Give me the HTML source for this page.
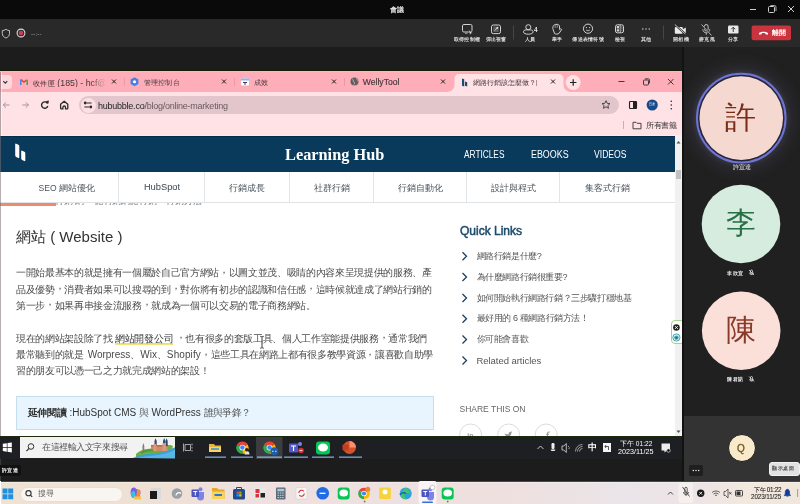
<!DOCTYPE html>
<html lang="zh-Hant-TW"><head><meta charset="utf-8">
<style>
*{margin:0;padding:0;box-sizing:border-box}
html,body{width:800px;height:504px;overflow:hidden;background:#1c1c1c;font-family:"Liberation Sans",sans-serif}
.a{position:absolute}
.t{position:absolute;white-space:nowrap;line-height:1}
body>*{will-change:transform}
svg{position:absolute;overflow:visible}
.lb{position:absolute;top:37px;font-size:5px;letter-spacing:.25px;line-height:1;color:#dcdcdc;font-weight:700;white-space:nowrap;transform:translateX(-50%)}
.tab{position:absolute;top:6.5px;font-size:7px;line-height:1;color:#45363a;white-space:nowrap;letter-spacing:.3px;font-weight:500}
.cx{position:absolute;top:0}
.sn{position:absolute;top:47.5px;font-size:8.5px;line-height:1;color:#4a545d;white-space:nowrap;transform:translateX(-50%)}
.p{position:absolute;left:16px;font-size:10px;line-height:16.2px;color:#4a4a4a;font-weight:350;white-space:nowrap;letter-spacing:-.33px}
.cm{position:relative;top:-3.5px}
.lk{color:#333;padding-bottom:.8px;background:linear-gradient(#f1de5c,#f1de5c) 0 100%/100% 1.8px no-repeat}
.ql{position:absolute;left:476.5px;font-size:9px;letter-spacing:-.4px;line-height:1;color:#555;white-space:nowrap}

</style></head><body>
<!-- ===== Teams title bar ===== -->
<div class="a" style="left:0;top:0;width:800px;height:19px;background:#0a0a0a"></div>
<div class="t" style="left:390px;top:5.5px;font-size:7px;font-weight:700;color:#e0e0e0">會議</div>
<svg style="left:0;top:0" width="800" height="19">
  <path d="M750 9.5h6" stroke="#cfcfcf" stroke-width="1"/>
  <rect x="768.5" y="6.5" width="6" height="6" rx="1" fill="none" stroke="#cfcfcf" stroke-width="1"/>
  <path d="M770.5 5.5h4a1.5 1.5 0 0 1 1.5 1.5v4" fill="none" stroke="#cfcfcf" stroke-width="0.8"/>
  <path d="M788 6l6 6M794 6l-6 6" stroke="#cfcfcf" stroke-width="1"/>
</svg>
<!-- ===== toolbar ===== -->
<div class="a" style="left:0;top:19px;width:800px;height:28px;background:#292929"></div>
<svg style="left:0;top:19px" width="800" height="28">
  <!-- shield -->
  <path d="M5.9 10.3c1.2.9 2.4 1.3 3.6 1.3v2.8c0 2.4-1.5 3.8-3.6 4.6c-2.1-.8-3.6-2.2-3.6-4.6v-2.8c1.2 0 2.4-.4 3.6-1.3z" fill="none" stroke="#d0d0d0" stroke-width="0.9"/>
  <!-- record -->
  <circle cx="21" cy="14" r="3.9" fill="none" stroke="#e0d8da" stroke-width="1.1"/>
  <circle cx="21" cy="14" r="2.3" fill="#d03a5a"/>
  <!-- control -->
  <rect x="462.5" y="5.5" width="9.5" height="7.5" rx="1.4" fill="none" stroke="#d4d4d4" stroke-width="1"/>
  <path d="M465 14.3h2.5" stroke="#bdbdbd" stroke-width=".8"/>
  <path d="M468.6 10.6l4 3.8l-1.8 .1l-.9 1.6z" fill="#f0f0f0" stroke="#222" stroke-width=".5"/>
  <!-- popout -->
  <rect x="491.5" y="6" width="9" height="8.6" rx="1.8" fill="none" stroke="#d4d4d4" stroke-width="1"/>
  <rect x="493.2" y="7.6" width="5.6" height="5.4" rx=".6" fill="#5c5c5c"/>
  <path d="M494.6 11.6l2.6-2.6" stroke="#e0e0e0" stroke-width=".8"/>
  <circle cx="497.3" cy="8.8" r=".9" fill="#f0f0f0"/>
  <!-- separator -->
  <path d="M513.5 6.5v14M663.5 6.5v14" stroke="#4a4a4a" stroke-width="0.9"/>
  <!-- people -->
  <circle cx="528.3" cy="8.2" r="2.5" fill="none" stroke="#d4d4d4" stroke-width="1"/>
  <path d="M523.5 12.8c0-1.3 1.2-1.9 2.5-1.9h4.6c1.3 0 2.5.6 2.5 1.9v.2c0 1.2-2 2.2-4.8 2.2s-4.8-1-4.8-2.2z" fill="none" stroke="#d4d4d4" stroke-width="1"/>
  <text x="534" y="12.6" font-size="6.5" fill="#e4e4e4" font-family="Liberation Sans" font-weight="bold">4</text>
  <!-- hand -->
  <path d="M554.6 14.6L553 10.2C552.6 9 552.8 7.6 553.5 6.6C554.5 5.3 557 4.9 558.5 5.7C559.5 6.3 559.6 7.6 559.5 9.1L559.6 10.6L560.4 9.9C561.1 9.5 561.8 10.2 561.4 10.9L559 14.4C558.1 15.3 555.5 15.3 554.6 14.6Z" fill="none" stroke="#d4d4d4" stroke-width="1"/>
  <path d="M555.2 6.2v2.8M557.2 5.6v3.2" stroke="#bdbdbd" stroke-width=".7"/>
  <!-- smiley -->
  <circle cx="588" cy="9.7" r="4.6" fill="none" stroke="#d4d4d4" stroke-width="1"/>
  <circle cx="586.4" cy="8.6" r=".65" fill="#d4d4d4"/><circle cx="589.6" cy="8.6" r=".65" fill="#d4d4d4"/>
  <path d="M586 10.9c1 1.1 3 1.1 4 0" fill="none" stroke="#d4d4d4" stroke-width="0.8"/>
  <!-- view -->
  <rect x="615.5" y="5.8" width="8" height="8" rx="1.8" fill="none" stroke="#d4d4d4" stroke-width="1"/>
  <path d="M620.2 5.8v8" stroke="#d4d4d4" stroke-width=".8"/>
  <rect x="616.7" y="7.1" width="2.4" height="2.3" rx=".5" fill="#d4d4d4"/><rect x="616.7" y="10.2" width="2.4" height="2.3" rx=".5" fill="#d4d4d4"/>
  <circle cx="621.9" cy="7.9" r=".55" fill="#d4d4d4"/><circle cx="621.9" cy="9.8" r=".55" fill="#d4d4d4"/><circle cx="621.9" cy="11.7" r=".55" fill="#d4d4d4"/>
  <!-- more -->
  <circle cx="642.8" cy="10" r=".7" fill="#d8d8d8"/><circle cx="646" cy="10" r=".7" fill="#d8d8d8"/><circle cx="649.2" cy="10" r=".7" fill="#d8d8d8"/>
  <!-- camera off -->
  <path d="M675.8 8h6a1 1 0 0 1 1 1v4.8a1 1 0 0 1-1 1h-6a1 1 0 0 1-1-1v-4.8a1 1 0 0 1 1-1zM682.8 10.2l3-1.8v6l-3-1.8z" fill="#ececec"/>
  <path d="M674.8 5.5l10.5 9.5" stroke="#292929" stroke-width="1.8"/>
  <path d="M674.8 5.5l10.5 9.5" stroke="#ececec" stroke-width="0.8"/>
  <!-- mic off -->
  <rect x="704.5" y="5.5" width="3.6" height="6.5" rx="1.8" fill="none" stroke="#d8d8d8" stroke-width="0.9"/>
  <path d="M702.8 10.2c0 2.2 1.6 3.6 3.5 3.6s3.5-1.4 3.5-3.6M706.3 13.8v2" fill="none" stroke="#d8d8d8" stroke-width="0.8"/>
  <path d="M701.5 5.5l10 11" stroke="#292929" stroke-width="1.6"/>
  <path d="M701.5 5.5l10 11" stroke="#d8d8d8" stroke-width="0.8"/>
  <!-- share -->
  <rect x="728" y="6.5" width="10.5" height="8" rx="1.2" fill="#e8e8e8"/>
  <path d="M733.25 13v-4.5M731.3 10.2l1.95-2l1.95 2" fill="none" stroke="#292929" stroke-width="0.9"/>
  <!-- leave -->
  <rect x="751.6" y="6.6" width="39.4" height="14.7" rx="2" fill="#c9343e"/>
  <path d="M758.9 14.3c1.6-2 7.5-2 9.2 0l-.4 1.4l-2.2-.5l-.3-1c-1-.3-2.4-.3-3.4 0l-.3 1l-2.2.5z" fill="#fff"/>
</svg>
<div class="t" style="left:30.5px;top:30.5px;font-size:6px;color:#b4b4b4;letter-spacing:.2px">--:--</div>
<div class="t" style="left:772px;top:30px;font-size:6.5px;color:#fff;font-weight:bold">離開</div>
<div class="lb" style="left:467px">取得控制權</div>
<div class="lb" style="left:496px">彈出視窗</div>
<div class="lb" style="left:530px">人員</div>
<div class="lb" style="left:557px">舉手</div>
<div class="lb" style="left:588px">傳送表情符號</div>
<div class="lb" style="left:619.5px">檢視</div>
<div class="lb" style="left:646px">其他</div>
<div class="lb" style="left:680.5px">開相機</div>
<div class="lb" style="left:706.5px">麥克風</div>
<div class="lb" style="left:733px">分享</div>
<!-- ===== stage ===== -->
<div class="a" style="left:682px;top:47px;width:2px;height:434px;background:#121212"></div>
<!-- ===== Chrome window ===== -->
<div class="a" style="left:0;top:70px;width:682px;height:1px;background:#181c06"></div>
<div class="a" style="left:0;top:71px;width:682px;height:1px;background:#d6ccb0"></div>
<div class="a" id="chrome" style="left:0;top:72px;width:682px;height:364px;background:#fff;overflow:hidden">
  <!-- tab strip -->
  <div class="a" style="left:0;top:0;width:682px;height:20px;background:#fdaeb9"></div>
  <div class="a" style="left:1px;top:2.5px;width:11px;height:14.5px;background:#fdd9de;border-radius:0 4px 4px 0"></div>
  <svg style="left:0;top:0" width="682" height="20">
    <path d="M3.3 9.2l2 2l2-2" fill="none" stroke="#333" stroke-width="1.1"/>
    <!-- gmail -->
    <path d="M20.8 7.6l3.2 2.5l3.2-2.5" fill="none" stroke="#ea4335" stroke-width="1.5"/>
    <path d="M20.8 13v-5.4" stroke="#4285f4" stroke-width="1.5"/>
    <path d="M27.2 13v-5.4" stroke="#34a853" stroke-width="1.5"/>
    <path d="M26.6 7.9l1.2-.9" stroke="#fbbc04" stroke-width="1.3"/>
    <path d="M112 7.5l4 4M116 7.5l-4 4" stroke="#222" stroke-width="1"/>
    <path d="M124.5 6v8" stroke="#e89aa6" stroke-width="1"/>
    <!-- cloud console hex -->
    <path d="M134.5 5.3l3.9 2.2v4.5l-3.9 2.2l-3.9-2.2v-4.5z" fill="#4a7fe0"/>
    <circle cx="134.5" cy="9.75" r="1.6" fill="#fff"/>
    <path d="M222 7.5l4 4M226 7.5l-4 4" stroke="#222" stroke-width="1"/>
    <path d="M234.5 6v8" stroke="#e89aa6" stroke-width="1"/>
    <!-- calendar-ish -->
    <rect x="241" y="6.5" width="8" height="7" rx="1" fill="#fff"/>
    <rect x="241" y="6.5" width="8" height="2" fill="#8ab4f8"/>
    <path d="M243 10.5h4M245 10.5v2.5" stroke="#3c4043" stroke-width="1"/>
    <path d="M332 7.5l4 4M336 7.5l-4 4" stroke="#222" stroke-width="1"/>
    <path d="M344.5 6v8" stroke="#e89aa6" stroke-width="1"/>
    <!-- globe -->
    <circle cx="354.5" cy="9.5" r="4" fill="#5f5f63"/>
    <path d="M352 7c1 .3 1.5 1 1.3 2c-.2.8.6 1.3 1.2 1.5c.3.9-.2 1.9-.9 2.4M356.5 6.2c-.3.8.2 1.4 1 1.5c.6.3.5 1 .3 1.6" fill="none" stroke="#fdaeb9" stroke-width=".8"/>
    <path d="M441 7.5l4 4M445 7.5l-4 4" stroke="#222" stroke-width="1"/>
  </svg>
  <div class="tab" style="left:33px;width:73px;overflow:hidden;-webkit-mask-image:linear-gradient(90deg,#000 80%,transparent)">收件匣<span style="font-size:8.8px;letter-spacing:0"> (185) - hcf@M</span></div>
  <div class="tab" style="left:143.5px">管理控制台</div>
  <div class="tab" style="left:253.5px">成效</div>
  <div class="tab" style="left:362.8px;font-size:8.6px;letter-spacing:0;top:5.8px;-webkit-text-stroke:.15px #45363a">WellyTool</div>
  <!-- active tab -->
  <svg style="left:447px;top:0" width="130" height="20">
    <path d="M0 20c4 0 7.5-3 7.5-7v-6.5c0-2.5 2-4.5 4.5-4.5h100c2.5 0 4.5 2 4.5 4.5v6.5c0 4 3.5 7 7.5 7z" fill="#fee2e6"/>
  </svg>
  <svg style="left:0;top:0" width="682" height="20">
    <path d="M462 6.5l2.2 .7v7.3l-2.2-.7z" fill="#1d4a6e"/>
    <path d="M465 9.5l2.2 .7v4.3l-2.2-.7z" fill="#1d4a6e"/>
    <path d="M551 7.5l4 4M555 7.5l-4 4" stroke="#222" stroke-width="1"/>
    <circle cx="573.2" cy="10.5" r="7.5" fill="#fee2e6"/>
    <path d="M570 10.5h6.4M573.2 7.3v6.4" stroke="#222" stroke-width="1.2"/>
    <path d="M618.5 9.5h6" stroke="#3a3a3a" stroke-width="1"/>
    <rect x="643.5" y="8" width="5" height="5" rx=".8" fill="none" stroke="#3a3a3a" stroke-width="1"/>
    <path d="M645 6.8h3.3a1.2 1.2 0 0 1 1.2 1.2v3.3" fill="none" stroke="#3a3a3a" stroke-width=".9"/>
    <path d="M668 7l5.5 5.5M673.5 7l-5.5 5.5" stroke="#3a3a3a" stroke-width="1"/>
  </svg>
  <div class="tab" style="left:472.8px;width:72px;letter-spacing:0;overflow:hidden;-webkit-mask-image:linear-gradient(90deg,#000 85%,transparent)">網路行銷該怎麼做？|</div>
  <!-- toolbar -->
  <div class="a" style="left:0;top:20px;width:682px;height:44px;background:#fee2e6"></div>
  <div class="a" style="left:79px;top:24px;width:540px;height:18px;background:#e3c6cb;border-radius:9px"></div>
  <div class="a" style="left:80.5px;top:25.5px;width:15px;height:15px;background:#fde0e4;border-radius:8px"></div>
  <svg style="left:0;top:20px" width="682" height="44">
    <path d="M9.5 13h-6.2M6 10.3l-2.7 2.7l2.7 2.7" fill="none" stroke="#a5959a" stroke-width="1"/>
    <path d="M22.3 13h6.2M25.8 10.3l2.7 2.7l-2.7 2.7" fill="none" stroke="#a5959a" stroke-width="1"/>
    <path d="M47.6 11.6a3.2 3.2 0 1 0 .2 2.4" fill="none" stroke="#2a2a2a" stroke-width="1.4"/>
    <path d="M45.6 9.3l3.3-.9l-.5 3.4z" fill="#2a2a2a"/>
    <path d="M60.6 12.3l3.6-3.1l3.6 3.1v3.9c0 .4-.3.7-.7.7h-1.6v-1.6a1.3 1.3 0 0 0-2.6 0v1.6h-1.6c-.4 0-.7-.3-.7-.7z" fill="none" stroke="#2a2a2a" stroke-width="1.3" stroke-linejoin="round"/>
    <!-- tune -->
    <path d="M86.6 11h5M84.3 15h5" stroke="#2a2a2a" stroke-width="1.1"/>
    <circle cx="85.2" cy="11" r="1.4" fill="#2a2a2a"/><circle cx="90.8" cy="15" r="1.4" fill="#2a2a2a"/>
    <!-- star -->
    <path d="M606 8.7l1.2 2.6l2.8.3l-2.1 1.9l.6 2.8l-2.5-1.5l-2.5 1.5l.6-2.8l-2.1-1.9l2.8-.3z" fill="none" stroke="#3a3a3a" stroke-width=".9"/>
    <!-- side panel -->
    <rect x="629.5" y="9.5" width="7" height="7" rx=".8" fill="none" stroke="#222" stroke-width="1.1"/>
    <rect x="633" y="9.5" width="3.5" height="7" fill="#222"/>
    <!-- avatar -->
    <circle cx="652.2" cy="13" r="5.6" fill="#164c8c"/>
    <!-- kebab -->
    <circle cx="671.3" cy="9.3" r=".8" fill="#222"/><circle cx="671.3" cy="13" r=".8" fill="#222"/><circle cx="671.3" cy="16.7" r=".8" fill="#222"/>
    <!-- bookmarks -->
    <path d="M623.5 29v8" stroke="#e8a0ab" stroke-width="1"/>
    <path d="M633 30.3h3l1 1h4v5.5h-8z" fill="none" stroke="#444" stroke-width="1"/>
  </svg>
  <div class="t" style="left:649px;top:30.5px;font-size:3px;color:#fff">宜達</div>
  <div class="t" style="left:98px;top:29.5px;font-size:9px;letter-spacing:-.24px;color:#6a5a5e"><span style="color:#1f1f1f">hububble.co</span>/blog/online-marketing</div>
  <div class="t" style="left:646px;top:49.5px;font-size:8px;color:#333;letter-spacing:-.3px">所有書籤</div>
    <div class="a" style="left:0;top:63px;width:682px;height:1px;background:#fdeaf0"></div>
  <!-- ===== page ===== -->
  <div class="a" style="left:0;top:64px;width:675px;height:300px;background:#fff;overflow:hidden">
    <!-- header -->
    <div class="a" style="left:0;top:0;width:675px;height:35.5px;background:#093a5c"></div>
    <div class="a" style="left:0;top:0;width:675px;height:1px;background:#062c4c"></div>
    <svg style="left:0;top:0" width="675" height="36">
      <path d="M15.2 8.3c0-.6.5-.9 1-.6l2.2 1.1c.5.3.9.8.9 1.4v11.3c0 .6-.5.9-1 .6l-2.2-1.1c-.5-.3-.9-.8-.9-1.4z" fill="#fff"/>
      <path d="M21.2 15.3c0-.6.5-.9 1-.6l2.2 1.1c.5.3.9.8.9 1.4v7.3c0 .6-.5.9-1 .6l-2.2-1.1c-.5-.3-.9-.8-.9-1.4z" fill="#fff"/>
    </svg>
    <div class="t" style="left:285px;top:10px;font-family:'Liberation Serif',serif;font-weight:bold;font-size:17px;color:#fff;transform:scaleX(.96);transform-origin:0 0">Learning Hub</div>
    <div class="t nav" style="left:463.5px;top:13.5px;font-size:10px;color:#fff;transform:scaleX(.83);transform-origin:0 0">ARTICLES</div>
    <div class="t nav" style="left:531px;top:13.5px;font-size:10px;color:#fff;transform:scaleX(.89);transform-origin:0 0">EBOOKS</div>
    <div class="t nav" style="left:594px;top:13.5px;font-size:10px;color:#fff;transform:scaleX(.86);transform-origin:0 0">VIDEOS</div>
    <!-- subnav -->
    <div class="a" style="left:0;top:35.5px;width:675px;height:31px;background:#fff;border-bottom:1px solid #dfe3e6"></div>
    <svg style="left:0;top:35.5px" width="675" height="31">
      <path d="M118.5 0v30M204.5 0v30M289.5 0v30M373.5 0v30M466.5 0v30M559.5 0v30" stroke="#e2e5e8" stroke-width="1"/>
    </svg>
    <div class="sn" style="left:66.75px">SEO 網站優化</div>
    <div class="sn" style="left:162px;font-size:9.3px;top:47px;-webkit-text-stroke:.05px #3a4550">HubSpot</div>
    <div class="sn" style="left:247px">行銷成長</div>
    <div class="sn" style="left:331.5px">社群行銷</div>
    <div class="sn" style="left:420.7px">行銷自動化</div>
    <div class="sn" style="left:513.5px">設計與程式</div>
    <div class="sn" style="left:607px">集客式行銷</div>
    <!-- progress -->
    <div class="a" style="left:0;top:66.5px;width:55.5px;height:3.7px;background:#ef8a6d"></div>
    <div class="a" style="left:55px;top:67px;width:148px;height:2px;overflow:hidden">
      <div class="t" style="left:0;top:-6px;font-size:9px;color:#777;letter-spacing:-.2px">行銷 網<span style="margin-left:11px">路行銷網路行銷</span><span style="margin-left:10px">行銷方法</span> 數位行</div>
    </div>
    <!-- article -->
    <div class="t" style="left:16px;top:93px;font-size:15px;color:#333">網站 ( Website )</div>
    <div class="p" style="top:129.3px">一開始最基本的就是擁有一個屬於自己官方網站<span class="cm">，</span>以圖文並茂、吸睛的內容來呈現提供的服務、產<br>品及優勢<span class="cm">，</span>消費者如果可以搜尋的到<span class="cm">，</span>對你將有初步的認識和信任感<span class="cm">，</span>這時候就達成了網站行銷的<br>第一步<span class="cm">，</span>如果再串接金流服務<span class="cm">，</span>就成為一個可以交易的電子商務網站。</div>
    <div class="p" style="top:194.8px">現在的網站架設除了找 <span class="lk">網站開發公司</span> <span class="cm">，</span>也有很多的套版工具、個人工作室能提供服務<span class="cm">，</span>通常我們<br>最常聽到的就是 <span style="letter-spacing:0;margin-left:1.5px">Worpress</span>、<span style="letter-spacing:0;margin-left:.3px">Wix</span>、<span style="letter-spacing:.1px;margin-left:.3px">Shopify</span><span class="cm">，</span>這些工具在網路上都有很多教學資源<span class="cm">，</span>讓喜歡自助學<br>習的朋友可以憑一己之力就完成網站的架設！</div>
    <svg style="left:0;top:0" width="675" height="300">
      <path d="M260.2 200.3c.8 0 1.5.3 1.8.8c.3-.5 1-.8 1.8-.8M262 201.1v10.3M260.2 212.2c.8 0 1.5-.3 1.8-.8c.3.5 1 .8 1.8.8" fill="none" stroke="#222" stroke-width=".9"/>
    </svg>
    <div class="a" style="left:15.5px;top:260px;width:418px;height:34px;background:#e8f5fe;border:1px solid #c6dfee"></div>
    <div class="t" style="left:27.7px;top:272px;font-size:10px;color:#333"><b style="letter-spacing:-.2px">延伸閱讀 </b>:HubSpot CMS <span style="color:#555;letter-spacing:-.3px">與</span> WordPress <span style="color:#555;letter-spacing:-.6px">誰與爭鋒？</span></div>
    <!-- sidebar -->
    <div class="t" style="left:460px;top:89px;font-size:12px;color:#1d4a6a;-webkit-text-stroke:.5px #1d4a6a">Quick Links</div>
    <svg style="left:0;top:0" width="675" height="300">
      <g fill="none" stroke="#1d3f5c" stroke-width="1.3" transform="translate(0 .5)">
        <path d="M462.5 115.7l4 4l-4 4M462.5 136.5l4 4l-4 4M462.5 157.5l4 4l-4 4M462.5 178.2l4 4l-4 4M462.5 199l4 4l-4 4M462.5 220l4 4l-4 4"/>
      </g>
      <circle cx="470.6" cy="299" r="11" fill="none" stroke="#dcdcdc"/>
      <circle cx="508.7" cy="299" r="11" fill="none" stroke="#dcdcdc"/>
      <circle cx="546.2" cy="299" r="11" fill="none" stroke="#dcdcdc"/>
      <text x="467.2" y="301.5" font-size="7" font-weight="bold" fill="#9a9a9a" font-family="Liberation Sans">in</text>
      <path d="M504.5 297.5c1.5.8 3 1 4.2.6c-.3-1.6 1-2.6 2.2-2.3l1.3-.5l-.6 1c0 3-2.5 5-5 5" fill="#9a9a9a"/>
      <path d="M547.5 301v-3.5c0-1 .5-1.5 1.5-1.5h.8M546 298.2h3" fill="none" stroke="#9a9a9a" stroke-width="1.1"/>
    </svg>
    <div class="ql" style="top:115.5px">網路行銷是什麼?</div>
    <div class="ql" style="top:136.5px">為什麼網路行銷很重要?</div>
    <div class="ql" style="top:157.5px">如何開始執行網路行銷？三步驟打穩地基</div>
    <div class="ql" style="top:178px">最好用的 6 種網路行銷方法！</div>
    <div class="ql" style="top:199px">你可能會喜歡</div>
    <div class="ql" style="top:220.3px;font-size:9.5px;letter-spacing:-.05px">Related articles</div>
    <div class="t" style="left:459.5px;top:269px;font-size:8.5px;color:#666">SHARE THIS ON</div>
  </div>
  <!-- scrollbar -->
  <div class="a" style="left:675px;top:64px;width:7px;height:300px;background:#f1f1f1"></div>
  <div class="a" style="left:676px;top:98px;width:5px;height:8.5px;background:#c1c1c1"></div>
  <svg style="left:675px;top:64px" width="7" height="300">
    <path d="M1.5 7.5l2-2.5l2 2.5z" fill="#505050"/>
    <path d="M1.5 294.5l2 2.5l2-2.5z" fill="#505050"/>
  </svg>
    <!-- widget -->
    <div class="a" style="left:670.5px;top:248.3px;width:14px;height:23.5px;border:1.5px solid #a6d18a;border-radius:4px;background:#fff"></div>
    <svg style="left:0;top:-8px" width="682" height="300">
      <circle cx="676.4" cy="263.5" r="3.3" fill="#222"/>
      <path d="M675 262.1l2.8 2.8M677.8 262.1l-2.8 2.8" stroke="#fff" stroke-width=".9"/>
      <circle cx="676.4" cy="273.5" r="3.6" fill="#e6f6f7" stroke="#2f9aa3" stroke-width=".9"/><circle cx="676.4" cy="273.6" r="2.2" fill="#3aa3ad"/><path d="M675.5 273h1.8v1.6h-1.8z" fill="#1d6c74"/>
    </svg>

</div>

<div class="a" style="left:0;top:72px;width:1px;height:364px;background:rgba(120,110,115,.55)"></div>
<div class="a" style="left:1px;top:72px;width:1px;height:64px;background:rgba(255,255,255,.5)"></div>
<!-- ===== shared taskbar ===== -->
<div class="a" style="left:0;top:436px;width:682px;height:1px;background:#1b2a0a"></div>
<div class="a" style="left:0;top:437px;width:682px;height:22px;background:#1e1f22"></div>
<svg style="left:0;top:437px" width="682" height="22">
  <path d="M2.8 6.8l4-.6v3.9h-4zM7.5 6.1l4.3-.6v4.6h-4.3zM2.8 10.8h4v3.9l-4-.6zM7.5 10.8h4.3v4.6l-4.3-.6z" fill="#fff"/>
</svg>
<div class="a" style="left:20px;top:437px;width:155px;height:21px;background:#f2f2f2"></div>
<svg style="left:20px;top:437px" width="155" height="21">
  <circle cx="11" cy="9.5" r="2.8" fill="none" stroke="#333" stroke-width="1"/>
  <path d="M9 11.5l-2.6 2.6" stroke="#333" stroke-width="1.1"/>
  <!-- castle art -->
  <path d="M113 21c4-3 8-5 14-5.5c8-.5 14-1.5 19-4.5c3-1.8 6-2.5 9-2.5v12.5z" fill="#f6f0d8"/>
  <path d="M116 17c3-3 7-4.5 11-5c6-.5 12-1 17-3c4-1.5 7-1.5 9 0l-1 3c-5 3-12 5-20 5.5c-6 .5-11 1-16 3z" fill="#6fae45"/>
  <path d="M113 21c5-3 11-4 18-4.3c8-.3 16-2.5 24-6.5v3c-7 4-14 6-22 7.5z" fill="#3b9fd8"/>
  <path d="M118 21c5-1.5 10-2 16-2.5c7-.5 13-2.5 21-5v8z" fill="#58b6e6"/>
  <rect x="131" y="9" width="17" height="5" fill="#cf8a68"/>
  <rect x="131" y="8" width="17" height="1.5" fill="#b86a4e"/>
  <path d="M143 4l1.2-3l1.2 3v5h-2.4z" fill="#2e4a78"/>
  <path d="M154.5 4l1.1-2.8l1.1 2.8v5h-2.2zM165.5 4l1.1-2.8l1.1 2.8v5h-2.2z" fill="#2e4a78" transform="translate(-20 0)"/>
  <rect x="142.5" y="6" width="3.5" height="8" fill="#d99a78"/>
  <rect x="133.5" y="7" width="3" height="7" fill="#d99a78"/>
  <path d="M122.5 9l.9-3l.9 3v6h-1.8z" fill="#8a7a6a"/>
  <path d="M121 16c3-2 8-3 12-2.5" fill="none" stroke="#4f9a38" stroke-width="2"/>
</svg>
<div class="t" style="left:41.5px;top:443px;font-size:9px;color:#555;letter-spacing:-.42px">在這裡輸入文字來搜尋</div>
<svg style="left:0;top:437px" width="682" height="22">
  <!-- task view -->
  <path d="M185 7.5h5.5v6h-5.5zM183.5 6.5v8M192 6.5v2M192 10v1.5M192 13v1.5" fill="none" stroke="#c8c8c8" stroke-width=".8"/>
  <!-- explorer -->
  <path d="M209 7h5l1 1.5h6v6.5h-12z" fill="#e8b43c"/>
  <path d="M209 10h12v5h-12z" fill="#f8d366"/>
  <path d="M211 12h8" stroke="#3a8ed8" stroke-width="1.5"/>
  <rect x="205" y="19.5" width="21" height="1.3" fill="#7aa7d0"/>
  <!-- chrome 1 -->
  <path d="M242.40 10.60L237.03 7.50A6.2 6.2 0 0 1 247.77 7.50z" fill="#ea4335"/><path d="M242.40 10.60L247.77 7.50A6.2 6.2 0 0 1 242.40 16.80z" fill="#fbbc04"/><path d="M242.40 10.60L242.40 16.80A6.2 6.2 0 0 1 237.03 7.50z" fill="#34a853"/><circle cx="242.4" cy="10.6" r="2.85" fill="#fff"/><circle cx="242.4" cy="10.6" r="2.23" fill="#4285f4"/>
  <path d="M244.5 17.5c0-2 1-3.5 2.5-3.5s2.5 1.5 2.5 3.5z" fill="#e8e0d8"/><circle cx="246.8" cy="12.8" r="1.8" fill="#2a2420"/>
  <rect x="231" y="19.5" width="22" height="1.3" fill="#7aa7d0"/>
  <!-- chrome active -->
  <rect x="256" y="0" width="26.5" height="22" fill="#3b3d40"/>
  <path d="M269.50 10.60L264.13 7.50A6.2 6.2 0 0 1 274.87 7.50z" fill="#ea4335"/><path d="M269.50 10.60L274.87 7.50A6.2 6.2 0 0 1 269.50 16.80z" fill="#fbbc04"/><path d="M269.50 10.60L269.50 16.80A6.2 6.2 0 0 1 264.13 7.50z" fill="#34a853"/><circle cx="269.5" cy="10.6" r="2.85" fill="#fff"/><circle cx="269.5" cy="10.6" r="2.23" fill="#4285f4"/>
  <circle cx="274.3" cy="14.3" r="4" fill="#1f5fa8"/><path d="M272 14.3h1.5M275 14.3h1.5" stroke="#cfe0f5" stroke-width="1"/>
  <rect x="257" y="19.5" width="25" height="1.3" fill="#8ab4dc"/>
  <!-- teams -->
  <rect x="289" y="6.5" width="9" height="9" rx="1" fill="#5059c9"/>
  <circle cx="300" cy="7" r="2" fill="#7b83eb"/>
  <path d="M291 9h5M293.5 9v5" stroke="#fff" stroke-width="1.1"/>
  <circle cx="301" cy="13.5" r="2.8" fill="#d13438"/>
  <path d="M299.6 13.5h2.8" stroke="#fff" stroke-width=".8"/>
  <rect x="284" y="19.5" width="24" height="1.3" fill="#7aa7d0"/>
  <!-- line -->
  <rect x="316" y="4.5" width="14" height="13" rx="3" fill="#06c755"/>
  <ellipse cx="323" cy="10.5" rx="5" ry="4" fill="#fff"/>
  <rect x="312" y="19.5" width="22" height="1.3" fill="#7aa7d0"/>
  <!-- ppt -->
  <circle cx="349.5" cy="10.5" r="6.5" fill="#d35230"/>
  <path d="M349.5 4a6.5 6.5 0 0 1 6.5 6.5h-6.5z" fill="#ff8f6b"/>
  <rect x="342.5" y="7.5" width="6" height="6" rx=".8" fill="#c43e1c"/>
  <rect x="339" y="19.5" width="23" height="1.3" fill="#7aa7d0"/>
  <!-- tray -->
  <path d="M537.5 12l3-3l3 3" fill="none" stroke="#ddd" stroke-width=".9"/>
  <rect x="551.5" y="6" width="3" height="6" rx="1.2" fill="#eee"/>
  <path d="M550.5 12.5h5l-1 1.5h-3z" fill="#eee"/>
  <path d="M562 9h1.8l2.5-2.5v9l-2.5-2.5h-1.8z" fill="none" stroke="#ddd" stroke-width=".8"/>
  <path d="M568 9l1.5 1.5M568.5 12l1-1" stroke="#ddd" stroke-width=".7"/>
  <path d="M575.5 14.5a7 7 0 0 1 7-7M577.5 14.5a5 5 0 0 1 5-5M579.5 14.5a3 3 0 0 1 3-3" fill="none" stroke="#bbb" stroke-width=".8"/>
  <rect x="603" y="6" width="8" height="9" fill="#f5f5f5"/>
  <path d="M605 9.5h3.5v3.5M606 8l-1 1.5l1 1.5" fill="none" stroke="#333" stroke-width=".8"/>
  <path d="M661.5 6.5h8.5v7h-3l-2.5 2v-2h-3z" fill="#eee"/>
  <circle cx="668.5" cy="13.5" r="1.8" fill="#1e1f22" stroke="#eee" stroke-width=".6"/>
</svg>
<div class="t" style="left:587.5px;top:442.5px;font-size:9px;font-weight:bold;color:#fff">中</div>
<div class="t" style="left:620px;top:440.5px;font-size:6.6px;color:#fff">下午 01:22</div>
<div class="t" style="left:618.3px;top:448.2px;font-size:7.2px;color:#fff">2023/11/25</div>
<!-- bottom strip -->
<div class="a" style="left:0;top:459px;width:682px;height:22px;background:#1c1c1c"></div>
<div class="a" style="left:0;top:459px;width:1px;height:22px;background:#3a3a3a"></div>
<div class="a" style="left:0;top:464.5px;width:21px;height:10.5px;background:#111;border-radius:0 2.5px 2.5px 0"></div>
<div class="t" style="left:1.5px;top:467.5px;font-size:5px;letter-spacing:.3px;font-weight:700;color:#f2f2f2">許宜達</div>

<!-- ===== participants panel ===== -->
<div class="a" style="left:684px;top:47px;width:116px;height:369px;background:#202020;overflow:hidden">
  <div class="a" style="left:12.25px;top:26.1px;width:90px;height:90px;border-radius:50%;box-shadow:0 0 16px 7px rgba(110,110,150,.2),0 0 5px 1px rgba(130,130,180,.2)"></div>
</div>
<svg style="left:684px;top:47px" width="116" height="369">
  <circle cx="57.25" cy="71.1" r="44.6" fill="#25253a"/>
  <circle cx="57.25" cy="71.1" r="44.3" fill="none" stroke="#6f74d2" stroke-width="2"/>
  <circle cx="57.25" cy="71.1" r="41.8" fill="#f5d8cf"/>
  <circle cx="57" cy="177" r="39.3" fill="#d5ecdf"/>
  <circle cx="57.2" cy="283.7" r="39.3" fill="#fbe0da"/>
  <!-- mic off small -->
  <g fill="none" stroke="#ececec" stroke-width=".75">
    <path d="M66.5 224v1.8a1 1 0 0 0 2 0v-1.8a1 1 0 0 0-2 0zM65.6 225.7a1.9 1.9 0 0 0 3.8 0M65 223l5 5"/>
    <path d="M66.5 330.5v1.8a1 1 0 0 0 2 0v-1.8a1 1 0 0 0-2 0zM65.6 332.2a1.9 1.9 0 0 0 3.8 0M65 329.5l5 5"/>
  </g>
</svg>
<div class="t" style="left:725px;top:102px;font-size:31px;font-weight:300;color:#7a2c18">許</div>
<div class="t" style="left:726px;top:208px;font-size:30px;font-weight:300;color:#276f45">李</div>
<div class="t" style="left:726px;top:315px;font-size:30px;font-weight:300;color:#8a3a28">陳</div>
<div class="t" style="left:732.5px;top:163.5px;font-size:6px;font-weight:500;color:#f4f4f4">許宜達</div>
<div class="t" style="left:727.2px;top:270.7px;font-size:5px;letter-spacing:.7px;font-weight:700;color:#ececec">李欣宜</div>
<div class="t" style="left:727.2px;top:376.5px;font-size:5px;letter-spacing:.7px;font-weight:700;color:#ececec">陳君諾</div>
<!-- self view -->
<div class="a" style="left:684px;top:416px;width:116px;height:65px;background:#333"></div>
<div class="a" style="left:727.5px;top:434px;width:28px;height:28px;border-radius:50%;background:#f8eacb;border:1px solid #1e1e1e"></div>
<div class="t" style="left:737.2px;top:443.5px;font-size:10px;color:#6e5516;-webkit-text-stroke:.3px #6e5516">Q</div>
<div class="a" style="left:688.5px;top:464.5px;width:14px;height:11px;border-radius:2px;background:#1f1f1f"></div>
<svg style="left:688.5px;top:464.5px" width="14" height="11">
  <circle cx="4.3" cy="5.5" r=".75" fill="#eee"/><circle cx="7" cy="5.5" r=".75" fill="#eee"/><circle cx="9.7" cy="5.5" r=".75" fill="#eee"/>
</svg>
<div class="a" style="left:768.8px;top:461.5px;width:30.7px;height:14px;border-radius:3px;background:#e2e2e2;border:1px solid #f2f2f2"></div>
<div class="t" style="left:772.4px;top:466.3px;font-size:5px;letter-spacing:.65px;font-weight:700;color:#555">顯示桌面</div>

<!-- ===== Win11 taskbar ===== -->
<div class="a" style="left:0;top:481px;width:800px;height:23px;background:linear-gradient(90deg,#efe2d3 0px,#efe0d4 140px,#eee0df 270px,#eee0de 500px,#ebe4e8 620px,#ece4e6 690px,#f2e8de 745px,#f0e6dc 800px)"></div>
<div class="a" style="left:0;top:481px;width:800px;height:1px;background:#4a4644"></div>
<div class="a" style="left:0;top:482px;width:800px;height:1px;background:rgba(255,255,255,.35)"></div>
<div class="a" style="left:0;top:481px;width:1px;height:23px;background:#fff"></div>
<div class="a" style="left:20px;top:486.5px;width:103px;height:14.5px;border-radius:8px;background:#f9f5f1;border:1px solid #e6ddd6"></div>
<svg style="left:0;top:481px" width="800" height="23">
  <!-- win logo -->
  <path d="M2.5 7.5h5v5h-5zM8.2 7.5h5v5h-5zM2.5 13.2h5v5h-5zM8.2 13.2h5v5h-5z" fill="#1f8fe0"/>
  <circle cx="28.5" cy="12.2" r="2.6" fill="none" stroke="#333" stroke-width="1.1"/>
  <path d="M30.4 14.1l1.8 1.8" stroke="#333" stroke-width="1.2"/>
  <!-- copilot -->
  <path d="M131 9c1-3 4-3 5-1l4 1c1 3 0 6-1 8h-6c-2-1-3-5-2-8z" fill="#7a5ae6"/>
  <path d="M131 12c1-2 3-3 4-1l1 6h-3c-1-1-2-3-2-5z" fill="#31c3f0"/>
  <path d="M137 9l3 0c1 2 0 5-1 8l-3 0z" fill="#f08c3a"/>
  <rect x="134" y="15.5" width="7" height="3" fill="#f4c24a"/>
  <!-- black square app -->
  <rect x="151" y="7" width="10" height="11" fill="#d9d9d9"/>
  <rect x="150" y="10" width="7" height="8" fill="#1a1a1a"/>
  <!-- grey circle -->
  <circle cx="177" cy="12.5" r="5.3" fill="#9aa0a6"/>
  <path d="M176 14.5a3 3 0 0 1 5-2" fill="none" stroke="#fff" stroke-width="1.3"/>
  <!-- teams -->
  <circle cx="200.5" cy="8.2" r="2" fill="#7b83eb"/>
  <path d="M197 11h7v5a3 3 0 0 1-7 0z" fill="#7b83eb"/>
  <rect x="191.5" y="8.5" width="7.5" height="7.5" rx="1" fill="#4b53bc"/>
  <path d="M193.3 10.5h4M195.3 10.5v4" stroke="#fff" stroke-width="1"/>
  <!-- explorer -->
  <path d="M212 7h5l1.5 1.5h6v9.5h-12.5z" fill="#e6a82c"/>
  <path d="M212 10.5h12.5v7.5h-12.5z" fill="#fad35a"/>
  <path d="M214.5 14h7.5" stroke="#2a7ad0" stroke-width="2"/>
  <!-- store -->
  <rect x="233" y="8" width="12" height="10.5" rx="1.5" fill="#234a8c"/>
  <path d="M236.5 8v-1.5h5v1.5" fill="none" stroke="#234a8c" stroke-width="1"/>
  <rect x="236.5" y="10.5" width="2.3" height="2.3" fill="#f25022"/><rect x="239.2" y="10.5" width="2.3" height="2.3" fill="#7fba00"/>
  <rect x="236.5" y="13.2" width="2.3" height="2.3" fill="#00a4ef"/><rect x="239.2" y="13.2" width="2.3" height="2.3" fill="#ffb900"/>
  <!-- red/black app -->
  <rect x="254.5" y="7" width="11" height="11" fill="#e8e8e8"/>
  <rect x="255.5" y="8" width="4" height="4" fill="#d9323a"/><rect x="260.5" y="12" width="4.5" height="4.5" fill="#222"/>
  <rect x="255.5" y="13" width="3.5" height="3.5" fill="#d9323a"/>
  <!-- calc -->
  <rect x="276" y="6.5" width="9.5" height="12" rx="1" fill="#5a6a78"/>
  <rect x="277.3" y="7.8" width="7" height="2.5" fill="#a8c8e0"/>
  <path d="M277.5 12h7M277.5 14.3h7M277.5 16.6h7" stroke="#c8d4dc" stroke-width="1" stroke-dasharray="1.5 .8"/>
  <!-- sync app -->
  <rect x="296" y="6.5" width="11" height="11.5" rx="1.5" fill="#f5f5f5" stroke="#ccc" stroke-width=".5"/>
  <path d="M298.8 12a2.8 2.8 0 0 1 5-1.7M304.3 12.5a2.8 2.8 0 0 1-5 1.7" fill="none" stroke="#d03a3a" stroke-width="1.1"/>
  <!-- zoom -->
  <circle cx="322.7" cy="12.3" r="6.3" fill="#1d6ce8"/>
  <path d="M319.5 12.3h6" stroke="#fff" stroke-width="1.3"/>
  <!-- line -->
  <rect x="337.7" y="6.5" width="12" height="12" rx="3" fill="#06c755"/>
  <ellipse cx="343.7" cy="12" rx="4.3" ry="3.5" fill="#fff"/>
  <!-- chrome -->
  <path d="M364.00 12.50L358.98 9.60A5.8 5.8 0 0 1 369.02 9.60z" fill="#ea4335"/><path d="M364.00 12.50L369.02 9.60A5.8 5.8 0 0 1 364.00 18.30z" fill="#fbbc04"/><path d="M364.00 12.50L364.00 18.30A5.8 5.8 0 0 1 358.98 9.60z" fill="#34a853"/><circle cx="364" cy="12.5" r="2.67" fill="#fff"/><circle cx="364" cy="12.5" r="2.09" fill="#4285f4"/>
  <circle cx="367.8" cy="8.3" r="2.5" fill="#e88a3a"/>
  <circle cx="364.6" cy="20.5" r=".9" fill="#777"/>
  <!-- yellow app -->
  <rect x="379.3" y="6.5" width="11.5" height="11.5" rx="1.5" fill="#f7d23a"/>
  <circle cx="385" cy="11" r="2.5" fill="#fff"/>
  <!-- edge -->
  <circle cx="405.7" cy="12.5" r="6" fill="#2aa3e0"/>
  <path d="M400 14c1 3 4 4.5 7 4c-2-1-3-3-2-5c1-1.5 4-1 5 0c0-3-2-6-5-6" fill="#46c46a"/>
  <path d="M400 14c1-2 4-3 6-1.5" fill="none" stroke="#1a5fb4" stroke-width="1.3"/>
  <!-- teams active -->
  <rect x="418.5" y="0" width="18" height="23" rx="2" fill="#f8f4f4"/>
  <circle cx="430.5" cy="8.2" r="2" fill="#7b83eb"/>
  <path d="M427 11h7v5a3 3 0 0 1-7 0z" fill="#7b83eb"/>
  <rect x="421.5" y="8.5" width="7.5" height="7.5" rx="1" fill="#4b53bc"/>
  <path d="M423.3 10.5h4M425.3 10.5v4" stroke="#fff" stroke-width="1"/>
  <circle cx="432.5" cy="6.5" r="2.3" fill="#fff" stroke="#999" stroke-width=".5"/>
  <rect x="422" y="20.5" width="11" height="1.5" rx=".75" fill="#3a6fd8"/>
  <!-- line 2 -->
  <rect x="441.7" y="6.5" width="12" height="12" rx="3" fill="#06c755"/>
  <ellipse cx="447.7" cy="12" rx="4.3" ry="3.5" fill="#fff"/>
  <circle cx="447.7" cy="20.5" r=".9" fill="#777"/>
  <!-- tray -->
  <path d="M668 13.5l2.5-2.5l2.5 2.5" fill="none" stroke="#333" stroke-width=".9"/>
  <rect x="678.4" y="2" width="14.6" height="20" rx="2" fill="#f5f0ee"/>
  <path d="M684.8 7.5a1.2 1.2 0 0 1 2.4 0v3.5a1.2 1.2 0 0 1-2.4 0zM683.5 11a2.5 2.5 0 0 0 5 0M686 13.5v1.5M682.5 6l7 9.5" fill="none" stroke="#333" stroke-width=".8"/>
  <circle cx="700.7" cy="12.3" r="3.7" fill="#1a1a1a"/>
  <path d="M699.3 10.9l2.8 2.8M702.1 10.9l-2.8 2.8" stroke="#fff" stroke-width=".9"/>
  <path d="M712 11.5a6 6 0 0 1 8 0M713.5 13a3.8 3.8 0 0 1 5 0M715 14.5a1.5 1.5 0 0 1 2 0" fill="none" stroke="#555" stroke-width=".9"/>
  <path d="M724 10.5h1.5l2.5-2.5v9l-2.5-2.5h-1.5z" fill="none" stroke="#444" stroke-width=".8"/>
  <path d="M729 11l2.5 2.5M731.5 11l-2.5 2.5" stroke="#444" stroke-width=".8"/>
  <rect x="735.5" y="9.5" width="7" height="5.5" rx=".8" fill="none" stroke="#333" stroke-width=".9"/>
  <rect x="736.5" y="10.5" width="4" height="3.5" fill="#333"/>
  <path d="M784.3 14.6h6.2c-.9-.9-1-2-1-3.4c0-1.6-1-2.9-2.1-2.9s-2.1 1.3-2.1 2.9c0 1.4-.1 2.5-1 3.4zM786.5 15.2h1.8" fill="#0f3f9e" stroke="#0f3f9e" stroke-width=".8"/>
  <path d="M797.6 8v8" stroke="#8a8a8a" stroke-width=".8"/>
</svg>
<div class="t" style="left:37.5px;top:489.5px;font-size:8px;color:#666">搜尋</div>
<div class="t" style="left:753.8px;top:486.5px;font-size:6.3px;color:#2a2a2a;letter-spacing:-.3px;-webkit-text-stroke:.1px #2a2a2a">下午 01:22</div>
<div class="t" style="left:750.5px;top:494.3px;font-size:6.3px;color:#2a2a2a;letter-spacing:-.1px;-webkit-text-stroke:.1px #2a2a2a">2023/11/25</div>

</body></html>
